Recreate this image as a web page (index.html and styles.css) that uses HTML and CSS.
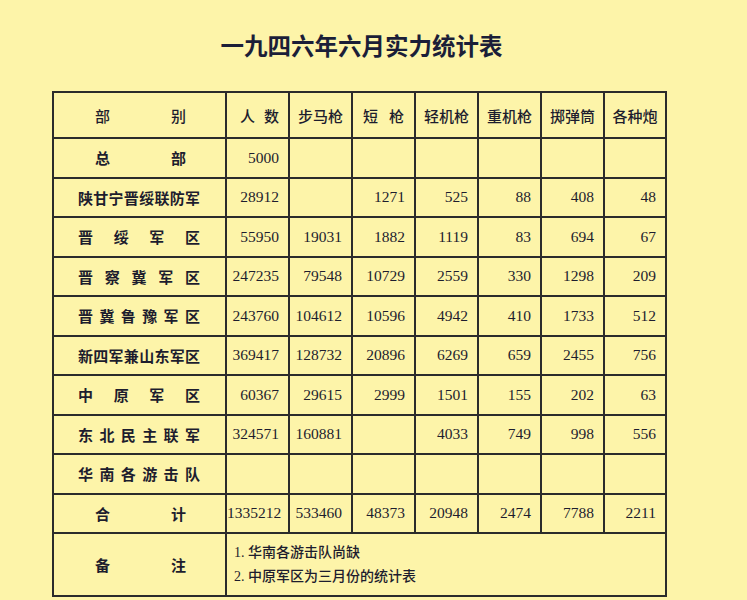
FILE: index.html
```html
<!DOCTYPE html>
<html lang="zh">
<head>
<meta charset="utf-8">
<title>一九四六年六月实力统计表</title>
<link rel="stylesheet" href="styles.css">
</head>
<body>
<div class="page">
  <h1 class="title">一九四六年六月实力统计表</h1>
  <table class="stats">
    <colgroup>
      <col class="c-name"><col class="c-num"><col class="c-num"><col class="c-num"><col class="c-num"><col class="c-num"><col class="c-num"><col class="c-last">
    </colgroup>
    <thead>
      <tr class="head">
        <th class="lab wide">部别</th>
        <th class="hj h-people">人数</th>
        <th>步马枪</th>
        <th class="hj h-short">短枪</th>
        <th>轻机枪</th>
        <th>重机枪</th>
        <th>掷弹筒</th>
        <th>各种炮</th>
      </tr>
    </thead>
    <tbody>
      <tr><td class="lab wide">总部</td><td>5000</td><td></td><td></td><td></td><td></td><td></td><td></td></tr>
      <tr><td class="lab">陕甘宁晋绥联防军</td><td>28912</td><td></td><td>1271</td><td>525</td><td>88</td><td>408</td><td>48</td></tr>
      <tr><td class="lab">晋绥军区</td><td>55950</td><td>19031</td><td>1882</td><td>1119</td><td>83</td><td>694</td><td>67</td></tr>
      <tr><td class="lab">晋察冀军区</td><td>247235</td><td>79548</td><td>10729</td><td>2559</td><td>330</td><td>1298</td><td>209</td></tr>
      <tr><td class="lab">晋冀鲁豫军区</td><td>243760</td><td>104612</td><td>10596</td><td>4942</td><td>410</td><td>1733</td><td>512</td></tr>
      <tr><td class="lab">新四军兼山东军区</td><td>369417</td><td>128732</td><td>20896</td><td>6269</td><td>659</td><td>2455</td><td>756</td></tr>
      <tr><td class="lab">中原军区</td><td>60367</td><td>29615</td><td>2999</td><td>1501</td><td>155</td><td>202</td><td>63</td></tr>
      <tr><td class="lab">东北民主联军</td><td>324571</td><td>160881</td><td></td><td>4033</td><td>749</td><td>998</td><td>556</td></tr>
      <tr><td class="lab">华南各游击队</td><td></td><td></td><td></td><td></td><td></td><td></td><td></td></tr>
      <tr><td class="lab wide">合计</td><td class="tight">1335212</td><td>533460</td><td>48373</td><td>20948</td><td>2474</td><td>7788</td><td>2211</td></tr>
      <tr class="notes"><td class="lab wide">备注</td><td colspan="7" class="note-cell"><p>1. 华南各游击队尚缺</p><p>2. 中原军区为三月份的统计表</p></td></tr>
    </tbody>
  </table>
</div>
</body>
</html>
```

FILE: styles.css
```css
html, body {
  margin: 0;
  padding: 0;
  background: #fdf4a9;
}
body {
  font-family: "Liberation Serif", "Noto Sans CJK SC", serif;
  color: #1d1d2e;
}
.page {
  width: 614px;
  margin-left: 52px;
  padding-top: 30px;
}
.title {
  margin: 0 0 31px 5px;
  height: 30px;
  line-height: 30px;
  text-align: center;
  font-family: "Noto Sans CJK SC", sans-serif;
  font-size: 23.5px;
  font-weight: 700;
  color: #1b1e38;
}
.stats {
  width: 614px;
  table-layout: fixed;
  border-collapse: collapse;
  border: 2.5px solid #262626;
  font-size: 15.5px;
}
.c-name { width: 173px; }
.c-num { width: 63px; }
.c-last { width: 62px; }
.stats th, .stats td {
  border: 2px solid #2b2b2b;
  padding: 0 9px 0 0;
  height: 37.5px;
  text-align: right;
  white-space: nowrap;
  overflow: visible;
}
.stats th {
  height: 44px;
  font-family: "Noto Sans CJK SC", sans-serif;
  font-weight: 500;
  font-size: 15px;
  text-align: center;
  padding: 0;
}
.stats .hj {
  text-align: justify;
  text-align-last: justify;
}
.stats .h-people { padding: 0 9px 0 13px; }
.stats .h-short { padding: 0 10px 0 10px; }
.stats .lab {
  font-family: "Noto Sans CJK SC", sans-serif;
  font-weight: 700;
  font-size: 15px;
  text-align: justify;
  text-align-last: justify;
  padding: 0 25px 0 24px;
}
.stats th.lab { font-weight: 500; }
.stats .lab.wide { padding: 0 39px 0 41px; }
.stats td.tight { padding-right: 8px; }
.notes td { height: 61px; }
.stats .note-cell {
  text-align: left;
  padding: 0 0 0 7px;
  font-size: 14px;
  font-weight: 500;
}
.note-cell p {
  margin: 0;
  line-height: 24px;
}
```
